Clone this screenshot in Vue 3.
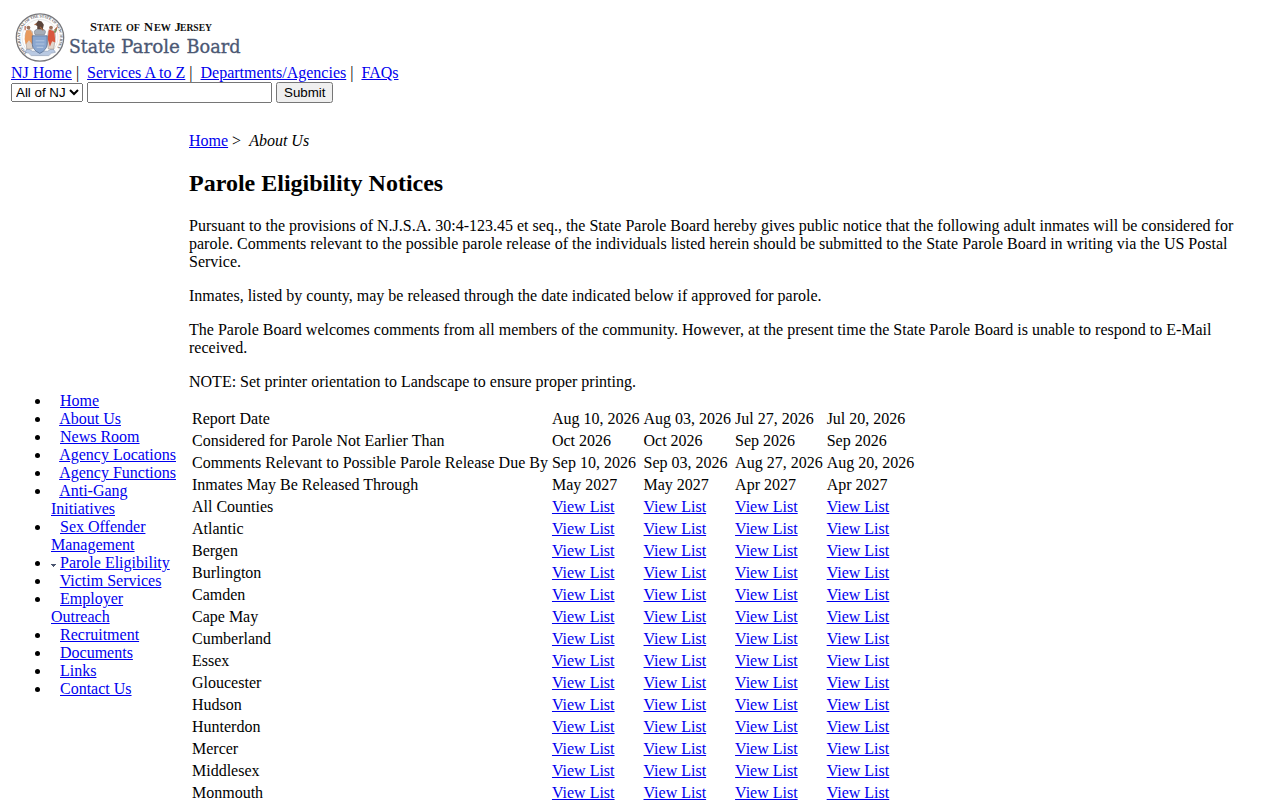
<script setup>
const topLinks = ['NJ Home', 'Services A to Z', 'Departments/Agencies', 'FAQs']
const menu = [
  'Home', 'About Us', 'News Room', 'Agency Locations', 'Agency Functions',
  'Anti-Gang Initiatives', 'Sex Offender Management', 'Parole Eligibility',
  'Victim Services', 'Employer Outreach', 'Recruitment', 'Documents', 'Links', 'Contact Us',
]
const dates = [
  ['Report Date', 'Aug 10, 2026', 'Aug 03, 2026', 'Jul 27, 2026', 'Jul 20, 2026'],
  ['Considered for Parole Not Earlier Than', 'Oct 2026', 'Oct 2026', 'Sep 2026', 'Sep 2026'],
  ['Comments Relevant to Possible Parole Release Due By', 'Sep 10, 2026', 'Sep 03, 2026', 'Aug 27, 2026', 'Aug 20, 2026'],
  ['Inmates May Be Released Through', 'May 2027', 'May 2027', 'Apr 2027', 'Apr 2027'],
]
const counties = [
  'All Counties', 'Atlantic', 'Bergen', 'Burlington', 'Camden', 'Cape May', 'Cumberland',
  'Essex', 'Gloucester', 'Hudson', 'Hunterdon', 'Mercer', 'Middlesex', 'Monmouth',
]
</script>

<template>
  <div class="page">
    <header>
      <svg class="logo" width="240" height="53" viewBox="11 11 240 53" role="img" aria-label="State of New Jersey State Parole Board">
        <circle cx="40" cy="37.5" r="23.700" fill="#fdfdfd" stroke="#77777b" stroke-width="1.3" />
        <circle cx="40" cy="37.5" r="18" fill="none" stroke="#c4c4c7" stroke-width=".4" />
        <path id="rim" d="M27.2 52.8A20 20 0 1 1 52.8 52.8" fill="none" />
        <text class="rim-text"><textPath href="#rim" textLength="91">THE GREAT SEAL OF THE STATE OF NEW JERSEY</textPath></text>
        <g transform="translate(40 38) scale(1.1 1.1) translate(-40 -39)">
          <path d="M26.500 52L28 49Q31 49 33 51H47Q49 49 52 49L54 52Q50 52 48 55H32Q30 52 26.500 52Z" fill="#b9c9e2" stroke="#7f8faa" stroke-width=".5" />
          <path d="M30 31q-3 1-3.500 6l1.500 12h5l1-9-1-7z" fill="#dfd2c8" stroke="#9b8f8a" stroke-width=".5" />
          <path d="M27.500 32l-1.500 8 1 5 3-4 3 4 .5-9-2-4z" fill="#e89a5e" />
          <path d="M50 31q4 1 4 7l-1.500 11h-5l-1-9 1-7z" fill="#e2d6cd" stroke="#9b8f8a" stroke-width=".5" />
          <path d="M48 31l5 2 1 10-3-1-2 5-2-7z" fill="#d9573e" />
          <circle cx="29.500" cy="29.500" r="1.700" fill="#9c725d" />
          <circle cx="50" cy="29.500" r="1.700" fill="#9c725d" />
          <path d="M26.500 28v4M53 32l2-2-1 4" fill="none" stroke="#b85b42" />
          <path d="M55 31l-2 3" stroke="#6f9b60" stroke-width="1.300" />
          <path d="M33 37H46.500V45Q46 50 39.800 53Q33.500 50 33 45Z" fill="#8ba7d0" stroke="#52698e" stroke-width=".7" />
          <path d="M36 41.500h8M36 44.500h8M37 47.500h6" stroke="#b2c5e0" />
          <path d="M35.500 36q-2-4 2-5h5q4 1 1.500 5z" fill="#a5adb9" stroke="#6b717c" stroke-width=".5" />
          <path d="M37.500 31v-3l-2-1 3-4 3 1 2 3-1 4z" fill="#5a443b" />
          <path d="M35 27l2-1M40 29l3 3" stroke="#a8653f" />
        </g>
        <text class="state" y="31"><tspan x="90">S</tspan><tspan class="small" x="97" textLength="25" lengthAdjust="spacingAndGlyphs">TATE</tspan><tspan class="small" x="126" textLength="14" lengthAdjust="spacingAndGlyphs">OF</tspan><tspan x="144">N</tspan><tspan class="small" x="154" textLength="17" lengthAdjust="spacingAndGlyphs">EW</tspan><tspan x="174.500">J</tspan><tspan class="small" x="180" textLength="32" lengthAdjust="spacingAndGlyphs">ERSEY</tspan></text>
        <text class="board" y="53"><tspan x="69" textLength="46" lengthAdjust="spacingAndGlyphs">State</tspan><tspan x="121" textLength="59" lengthAdjust="spacingAndGlyphs">Parole</tspan><tspan x="186.500" textLength="54" lengthAdjust="spacingAndGlyphs">Board</tspan></text>
      </svg>
      <nav>
        <template v-for="(link, i) in topLinks" :key="link"><a href="#">{{ link }}</a><span v-if="i < 3">&#32;|&nbsp;&#32;</span></template>
      </nav>
      <form @submit.prevent>
        <select><option>All of NJ</option></select>
        <input type="text">
        <button type="submit">Submit</button>
      </form>
    </header>
    <div class="body">
      <aside>
        <ul>
          <li v-for="item in menu" :key="item"><svg class="marker" width="5" height="5" viewBox="0 0 5 5"><path v-if="item === 'Parole Eligibility'" d="M0 1h5v1h-1v1h-1v1h-1v-1h-1v-1h-1z" fill="#4b5670" /></svg>{{ ' ' }}<a href="#">{{ item }}</a></li>
        </ul>
      </aside>
      <main>
        <div><a href="#">Home</a> &gt;&nbsp; <em>About Us</em></div>
        <h2>Parole Eligibility Notices</h2>
        <p>Pursuant to the provisions of N.J.S.A. 30:4-123.45 et seq., the State Parole Board hereby gives public notice that the following adult inmates will be considered for parole. Comments relevant to the possible parole release of the individuals listed herein should be submitted to the State Parole Board in writing via the US Postal Service.</p>
        <p>Inmates, listed by county, may be released through the date indicated below if approved for parole.</p>
        <p>The Parole Board welcomes comments from all members of the community. However, at the present time the State Parole Board is unable to respond to E-Mail received.</p>
        <p>NOTE: Set printer orientation to Landscape to ensure proper printing.</p>
        <table>
          <tbody>
            <tr v-for="row in dates" :key="row[0]"><td v-for="(cell, i) in row" :key="i">{{ cell }}</td></tr>
            <tr v-for="county in counties" :key="county">
              <td>{{ county }}</td>
              <td v-for="n in 4" :key="n"><a href="#">View List</a></td>
            </tr>
          </tbody>
        </table>
      </main>
    </div>
  </div>
</template>

<style>
body { margin: 0; background: #fff; }
</style>

<style scoped>
.page {
  height: 800px;
  overflow: hidden;
  box-sizing: border-box;
  padding: 11px 11px 0;
  font: 16px/18px "Liberation Serif", "Times New Roman", serif;
  color: #000;
}
a { color: #0000ee; text-decoration: underline; }
.logo { display: block; }
.rim-text { font: bold 4px "Liberation Serif", serif; fill: #66666a; }
.state { font: bold 12.500px "Liberation Serif", serif; fill: #111; }
.small { font-size: 9.500px; }
.board { font: 19px "DejaVu Serif Condensed", "DejaVu Serif", serif; fill: #4b5874; stroke: #4b5874; stroke-width: .3px; }
nav { white-space: pre-wrap; height: 18px; }
form { height: 21px; display: flex; align-items: center; gap: 4px; }
select { margin: 0; height: 19px; width: 72px; }
input { margin: 0; box-sizing: border-box; width: 185px; height: 21px; }
button { margin: 0; width: 57px; height: 21px; }
.body { display: flex; padding-top: 29px; }
aside { width: 168px; flex: none; padding-top: 260px; }
ul { margin: 0; padding-left: 40px; }
.marker { display: inline-block; }
main { width: 1054px; margin-left: 10px; }
h2 { font-size: 24px; line-height: 27px; margin: 20px 0; }
p { margin: 0 0 16px; }
table { border-spacing: 2px; }
td { padding: 1px; white-space: nowrap; }
</style>
